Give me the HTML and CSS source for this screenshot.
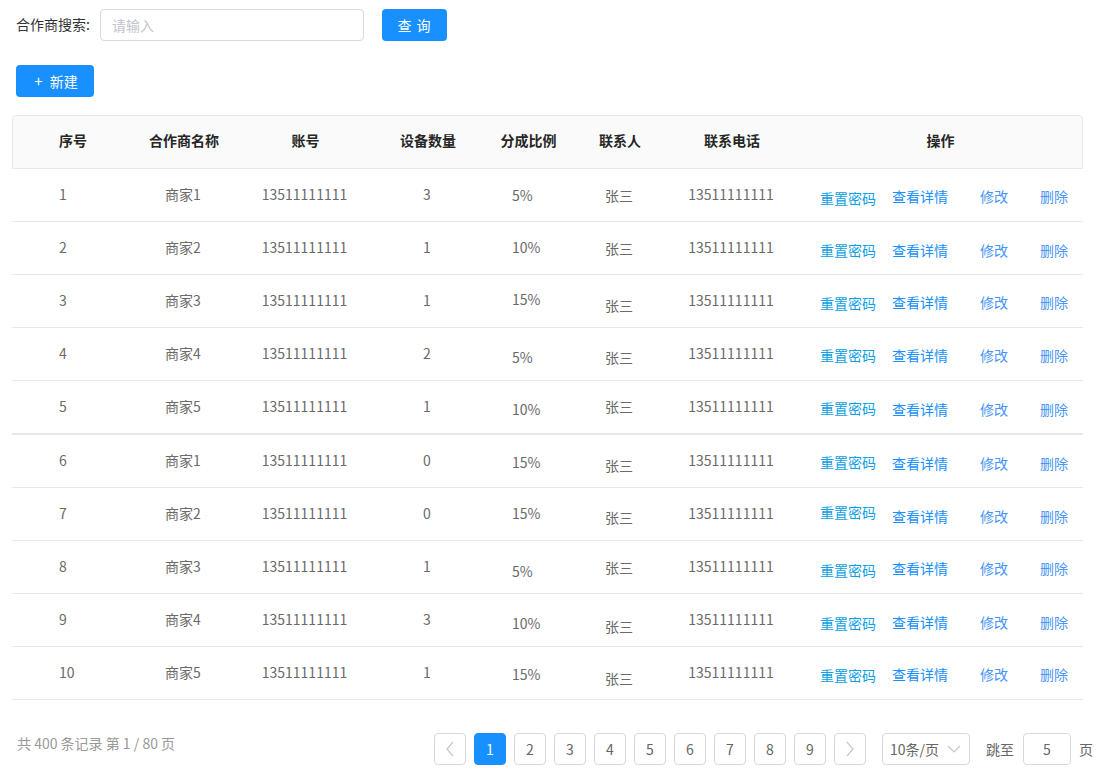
FILE: index.html
```html
<!DOCTYPE html>
<html lang="zh">
<head>
<meta charset="utf-8">
<title>合作商管理</title>
<link rel="stylesheet" href="styles.css">
</head>
<body>
<div class="page">
  <div class="search">
    <span class="label">合作商搜索:</span>
    <input class="input" type="text" placeholder="请输入">
    <button class="btn btn-query">查 询</button>
  </div>
  <div class="toolbar">
    <button class="btn btn-new"><span class="plus">+</span>新建</button>
  </div>

  <div class="table">
    <div class="thead">
      <div class="c c1">序号</div>
      <div class="c">合作商名称</div>
      <div class="c">账号</div>
      <div class="c">设备数量</div>
      <div class="c c5h">分成比例</div>
      <div class="c">联系人</div>
      <div class="c">联系电话</div>
      <div class="c">操作</div>
    </div>

    <div class="row">
      <div class="c c1">1</div><div class="c">商家1</div><div class="c">13511111111</div><div class="c">3</div>
      <div class="c c5 d1">5%</div><div class="c d1">张三</div><div class="c">13511111111</div>
      <div class="c ops"><span class="a reset d4">重置密码</span><span class="a detail d2">查看详情</span><span class="a edit d2">修改</span><span class="a del d2">删除</span></div>
    </div>
    <div class="row">
      <div class="c c1">2</div><div class="c">商家2</div><div class="c">13511111111</div><div class="c">1</div>
      <div class="c c5">10%</div><div class="c d1">张三</div><div class="c">13511111111</div>
      <div class="c ops"><span class="a reset d3">重置密码</span><span class="a detail d3">查看详情</span><span class="a edit d3">修改</span><span class="a del d3">删除</span></div>
    </div>
    <div class="row">
      <div class="c c1">3</div><div class="c">商家3</div><div class="c">13511111111</div><div class="c">1</div>
      <div class="c c5 u1">15%</div><div class="c d5">张三</div><div class="c">13511111111</div>
      <div class="c ops"><span class="a reset d3">重置密码</span><span class="a detail d2">查看详情</span><span class="a edit d2">修改</span><span class="a del d2">删除</span></div>
    </div>
    <div class="row">
      <div class="c c1">4</div><div class="c">商家4</div><div class="c">13511111111</div><div class="c">2</div>
      <div class="c c5 d4">5%</div><div class="c d4">张三</div><div class="c">13511111111</div>
      <div class="c ops"><span class="a reset d2">重置密码</span><span class="a detail d2">查看详情</span><span class="a edit d2">修改</span><span class="a del d2">删除</span></div>
    </div>
    <div class="row row-split">
      <div class="c c1">5</div><div class="c">商家5</div><div class="c">13511111111</div><div class="c">1</div>
      <div class="c c5 d3">10%</div><div class="c">张三</div><div class="c">13511111111</div>
      <div class="c ops"><span class="a reset d2">重置密码</span><span class="a detail d3">查看详情</span><span class="a edit d3">修改</span><span class="a del d3">删除</span></div>
    </div>
    <div class="row">
      <div class="c c1">6</div><div class="c">商家1</div><div class="c">13511111111</div><div class="c">0</div>
      <div class="c c5 d2">15%</div><div class="c d5">张三</div><div class="c">13511111111</div>
      <div class="c ops"><span class="a reset d2">重置密码</span><span class="a detail d3">查看详情</span><span class="a edit d3">修改</span><span class="a del d3">删除</span></div>
    </div>
    <div class="row">
      <div class="c c1">7</div><div class="c">商家2</div><div class="c">13511111111</div><div class="c">0</div>
      <div class="c c5">15%</div><div class="c d4">张三</div><div class="c">13511111111</div>
      <div class="c ops"><span class="a reset u1">重置密码</span><span class="a detail d3">查看详情</span><span class="a edit d3">修改</span><span class="a del d3">删除</span></div>
    </div>
    <div class="row">
      <div class="c c1">8</div><div class="c">商家3</div><div class="c">13511111111</div><div class="c">1</div>
      <div class="c c5 d5">5%</div><div class="c d1">张三</div><div class="c">13511111111</div>
      <div class="c ops"><span class="a reset d4">重置密码</span><span class="a detail d2">查看详情</span><span class="a edit d2">修改</span><span class="a del d2">删除</span></div>
    </div>
    <div class="row">
      <div class="c c1">9</div><div class="c">商家4</div><div class="c">13511111111</div><div class="c">3</div>
      <div class="c c5 d4">10%</div><div class="c d7">张三</div><div class="c">13511111111</div>
      <div class="c ops"><span class="a reset d4">重置密码</span><span class="a detail d3">查看详情</span><span class="a edit d3">修改</span><span class="a del d3">删除</span></div>
    </div>
    <div class="row">
      <div class="c c1">10</div><div class="c">商家5</div><div class="c">13511111111</div><div class="c">1</div>
      <div class="c c5 d2">15%</div><div class="c d6">张三</div><div class="c">13511111111</div>
      <div class="c ops"><span class="a reset d3">重置密码</span><span class="a detail d2">查看详情</span><span class="a edit d2">修改</span><span class="a del d2">删除</span></div>
    </div>
  </div>

  <div class="footer">
    <div class="total">共 400 条记录 第 1 / 80 页</div>
    <div class="pager">
      <span class="pg arrow"><svg width="12" height="16" viewBox="0 0 12 16"><path d="M9 1 L3 8 L9 15" fill="none" stroke="#c8c8c8" stroke-width="1.2"/></svg></span>
      <span class="pg active">1</span>
      <span class="pg">2</span>
      <span class="pg">3</span>
      <span class="pg">4</span>
      <span class="pg">5</span>
      <span class="pg">6</span>
      <span class="pg">7</span>
      <span class="pg">8</span>
      <span class="pg">9</span>
      <span class="pg arrow"><svg width="12" height="16" viewBox="0 0 12 16"><path d="M3 1 L9 8 L3 15" fill="none" stroke="#c8c8c8" stroke-width="1.2"/></svg></span>
    </div>
    <div class="size">10条/页<svg class="chev" width="14" height="8" viewBox="0 0 14 8"><path d="M1 1 L7 7 L13 1" fill="none" stroke="#c8c8c8" stroke-width="1.2"/></svg></div>
    <span class="jump">跳至</span>
    <div class="jump-input">5</div>
    <span class="unit">页</span>
  </div>
</div>
</body>
</html>
```

FILE: styles.css
```css
* { box-sizing: border-box; }
body {
  margin: 0;
  font-family: "Noto Sans CJK SC", "Noto Sans", sans-serif;
  font-size: 14px;
  color: #333;
  background: #fff;
}
.search {
  display: flex;
  align-items: center;
  padding: 9px 0 0 16px;
  height: 41px;
}
.label {
  width: 84px;
  font-size: 14px;
  color: #333;
  line-height: 32px;
  padding-bottom: 2px;
}
.input {
  width: 264px;
  height: 32px;
  border: 1px solid #d9d9d9;
  border-radius: 4px;
  padding: 0 11px;
  font-family: inherit;
  font-size: 14px;
  outline: none;
}
.input::placeholder { color: #c0c4cc; }
.btn {
  height: 32px;
  border: none;
  border-radius: 4px;
  background: #1890ff;
  color: #fff;
  font-family: inherit;
  font-size: 14px;
  padding: 0;
  line-height: 30px;
}
.btn-query {
  margin-left: 18px;
  width: 65px;
  letter-spacing: 1px;
}
.toolbar {
  padding: 24px 0 0 16px;
  height: 56px;
}
.btn-new {
  width: 78px;
  display: block;
  padding-left: 2px;
}
.plus { margin-right: 7px; font-size: 15px; }

.table {
  margin: 18px 0 0 12px;
  width: 1071px;
}
.thead, .row {
  display: grid;
  grid-template-columns: 110px 122px 121px 124px 83px 94px 130px 287px;
}
.thead {
  height: 54px;
  background: #fafafa;
  border: 1px solid #e8e8e8;
  border-radius: 4px 4px 0 0;
  font-weight: bold;
  color: #262626;
}
.thead .c { height: 52px; padding-bottom: 4px; }
.row {
  height: 53px;
  border-bottom: 1px solid #e8e8e8;
  color: #6a6a6a;
}
.row-split { height: 54px; border-bottom-width: 2px; }
.c {
  display: flex;
  align-items: center;
  justify-content: center;
  height: 52px;
  line-height: 20px;
  white-space: nowrap;
  padding-bottom: 3px;
}
.thead .c:first-child { margin-left: -1px; }
.c1 { justify-content: flex-start; padding-left: 47px; }
.c5 { justify-content: flex-start; padding-left: 23px; }
.c5h { padding-right: 6px; }
.ops {
  justify-content: flex-start;
  padding-left: 24px;
  padding-bottom: 2px;
}
.a { display: block; line-height: 20px; }
.reset { color: #0ea0e6; }
.detail { color: #1890ff; margin-left: 16px; }
.edit { color: #4694f8; margin-left: 32px; }
.del { color: #4a96f8; margin-left: 32px; }

.d1 { padding-top: 2px; }
.d2 { padding-top: 4px; }
.d3 { padding-top: 6px; }
.d4 { padding-top: 8px; }
.d5 { padding-top: 10px; }
.d6 { padding-top: 12px; }
.d7 { padding-top: 14px; }
.u1 { padding-bottom: 5px; }
.ops .u1 { padding-bottom: 2px; }

.footer {
  display: flex;
  align-items: flex-start;
  margin-top: 33px;
  padding-left: 17px;
}
.total {
  width: 417px;
  color: #999;
  line-height: 20px;
}
.pager { display: flex; gap: 8px; }
.pg {
  width: 32px;
  height: 32px;
  border: 1px solid #d9d9d9;
  border-radius: 4px;
  display: flex;
  align-items: center;
  justify-content: center;
  color: #666;
  font-size: 14px;
}
.pg.active {
  background: #1890ff;
  border-color: #1890ff;
  color: #fff;
}
.size {
  margin-left: 16px;
  width: 88px;
  height: 32px;
  border: 1px solid #d9d9d9;
  border-radius: 4px;
  display: flex;
  align-items: center;
  padding-left: 7px;
  color: #666;
}
.chev { margin-left: 8px; }
.jump {
  margin-left: 16px;
  line-height: 32px;
  color: #666;
}
.jump-input {
  margin-left: 9px;
  width: 48px;
  height: 32px;
  border: 1px solid #d9d9d9;
  border-radius: 4px;
  display: flex;
  align-items: center;
  justify-content: center;
  color: #666;
}
.unit {
  margin-left: 8px;
  line-height: 32px;
  color: #666;
}
```
